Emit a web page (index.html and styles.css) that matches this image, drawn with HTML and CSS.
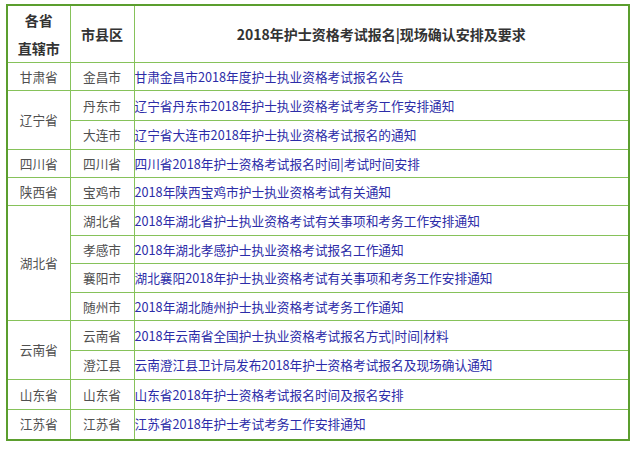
FILE: index.html
```html
<!DOCTYPE html>
<html lang="zh-CN">
<head>
<meta charset="utf-8">
<link rel="stylesheet" href="styles.css">
</head>
<body>
<table class="tbl">
  <colgroup>
    <col class="c1"><col class="c2"><col class="c3">
  </colgroup>
  <thead>
    <tr class="hd">
      <th>各省<br>直辖市</th>
      <th>市县区</th>
      <th>2018年护士资格考试报名|现场确认安排及要求</th>
    </tr>
  </thead>
  <tbody>
    <tr class="r28"><td class="prov">甘肃省</td><td class="city">金昌市</td><td class="lnk">甘肃金昌市2018年度护士执业资格考试报名公告</td></tr>
    <tr class="r30"><td class="prov" rowspan="2">辽宁省</td><td class="city">丹东市</td><td class="lnk">辽宁省丹东市2018年护士执业资格考试考务工作安排通知</td></tr>
    <tr class="r29"><td class="city">大连市</td><td class="lnk">辽宁省大连市2018年护士执业资格考试报名的通知</td></tr>
    <tr class="r28"><td class="prov">四川省</td><td class="city">四川省</td><td class="lnk">四川省2018年护士资格考试报名时间|考试时间安排</td></tr>
    <tr class="r28"><td class="prov">陕西省</td><td class="city">宝鸡市</td><td class="lnk">2018年陕西宝鸡市护士执业资格考试有关通知</td></tr>
    <tr class="r30"><td class="prov" rowspan="4">湖北省</td><td class="city">湖北省</td><td class="lnk">2018年湖北省护士执业资格考试有关事项和考务工作安排通知</td></tr>
    <tr class="r28"><td class="city">孝感市</td><td class="lnk">2018年湖北孝感护士执业资格考试报名工作通知</td></tr>
    <tr class="r29"><td class="city">襄阳市</td><td class="lnk">湖北襄阳2018年护士执业资格考试有关事项和考务工作安排通知</td></tr>
    <tr class="r28"><td class="city">随州市</td><td class="lnk">2018年湖北随州护士执业资格考试考务工作通知</td></tr>
    <tr class="r30"><td class="prov" rowspan="2">云南省</td><td class="city">云南省</td><td class="lnk">2018年云南省全国护士执业资格考试报名方式|时间|材料</td></tr>
    <tr class="r29"><td class="city">澄江县</td><td class="lnk">云南澄江县卫计局发布2018年护士资格考试报名及现场确认通知</td></tr>
    <tr class="r30"><td class="prov">山东省</td><td class="city">山东省</td><td class="lnk">山东省2018年护士资格考试报名时间及报名安排</td></tr>
    <tr class="r30"><td class="prov">江苏省</td><td class="city">江苏省</td><td class="lnk">江苏省2018年护士考试考务工作安排通知</td></tr>
  </tbody>
</table>
</body>
</html>
```
FILE: styles.css
```css
html, body {
  margin: 0;
  padding: 0;
  background: #ffffff;
}
body {
  font-family: "Noto Sans CJK SC", "DejaVu Sans", sans-serif;
  font-size: 12.7px;
  color: #444444;
}
.tbl {
  margin: 4px 0 0 6px;
  width: 624px;
  border-collapse: collapse;
  table-layout: fixed;
  border: 2px solid #5b9e2e;
}
.c1 { width: 63px; }
.c2 { width: 64px; }
.c3 { width: auto; }
.tbl th, .tbl td {
  border: 1px solid #86c25a;
  padding: 0;
  line-height: 18px;
  vertical-align: middle;
}
.tbl th {
  font-size: 14px;
  font-weight: bold;
  color: #333333;
  text-align: center;
  line-height: 28px;
}
.hd { height: 57px; }
.r28 { height: 28px; }
.r29 { height: 29px; }
.r30 { height: 30px; }
.prov, .city {
  text-align: center;
  color: #505050;
}
.lnk {
  color: #2c2ca8;
  padding-left: 1px;
  white-space: nowrap;
}
```
